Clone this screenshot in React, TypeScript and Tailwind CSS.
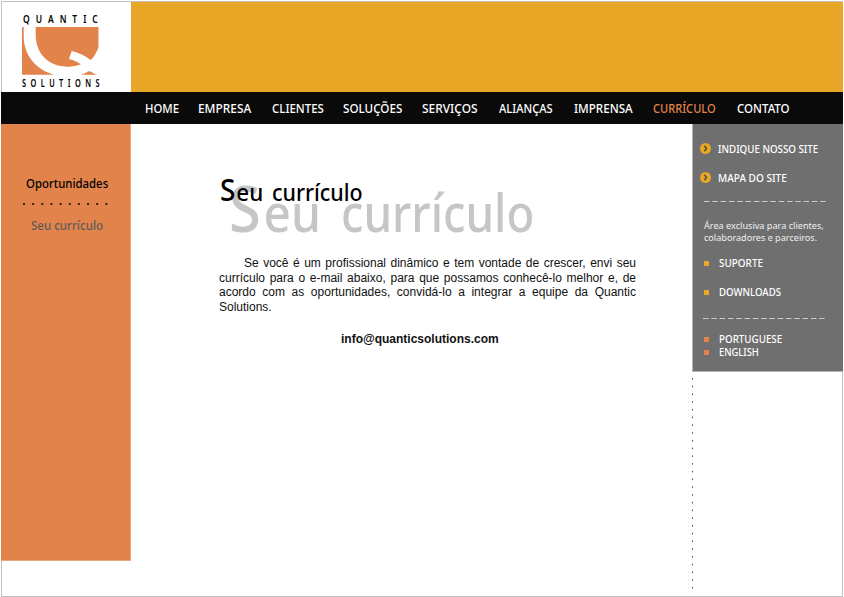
import { useLayoutEffect, useRef, useState, type ReactNode } from "react";

const META = "font-['Noto_Sans','Open_Sans',sans-serif]";

/** One line of text condensed or expanded to the width of its box. */
function Fit({ className = "", children }: { className?: string; children: ReactNode }) {
  const box = useRef<HTMLSpanElement>(null);
  const text = useRef<HTMLSpanElement>(null);
  const [scale, setScale] = useState(1);
  useLayoutEffect(() => {
    if (box.current && text.current) setScale(box.current.clientWidth / text.current.offsetWidth);
  }, []);
  return (
    <span ref={box} className={`block shrink-0 whitespace-nowrap ${META} ${className}`}>
      <span ref={text} className="inline-block origin-left" style={{ transform: `scaleX(${scale})` }}>
        {children}
      </span>
    </span>
  );
}

const nav = [
  { label: "HOME", box: "w-[34px] ml-[144px]" },
  { label: "EMPRESA", box: "w-[53px] ml-[19px]" },
  { label: "CLIENTES", box: "w-[52px] ml-[21px]" },
  { label: "SOLUÇÕES", box: "w-[59px] ml-[19px]" },
  { label: "SERVIÇOS", box: "w-[56px] ml-[20px]" },
  { label: "ALIANÇAS", box: "w-[54px] ml-[21px]" },
  { label: "IMPRENSA", box: "w-[59px] ml-[21px]" },
  { label: "CURRÍCULO", box: "w-[63px] ml-[20px] text-[#e2834c]" },
  { label: "CONTATO", box: "w-[53px] ml-[21px]" },
];

function Logo() {
  return (
    <div className="flex h-[90px] w-[129px] flex-col bg-white pt-[10px] pl-[20px]">
      <Fit className="ml-px h-[15px] w-[81px] text-[10px] leading-[15px] font-semibold tracking-[7px]">QUANTIC</Fit>
      <svg className="block h-[48px] w-[78px]" viewBox="0 0 78 48">
        <g fill="#e2834c">
          <path d="M0 0H1.7V9C1.7 28 13 42 32 47.7H0Z" />
          <path d="M13.7 0H76.5V20C75 25 72 30 68.7 33C63 29 57 25.5 49.7 24L47 32C52 33 56 35 59 37.3C55 39 51 39.7 46.3 39.7C27 39.7 13.7 27 13.7 8Z" />
          <path d="M58.5 47.7C62 46.8 65 45.5 67.3 44L74.5 47.7Z" />
        </g>
      </svg>
      <Fit className="mt-px h-[14px] w-[82px] text-[10px] leading-[14px] font-semibold tracking-[6px]">SOLUTIONS</Fit>
    </div>
  );
}

function Dashes({ className }: { className: string }) {
  return (
    <svg className={`block h-px w-[122px] ${className}`} viewBox="0 0 122 1">
      <path d="M0 .5H122" stroke="#c9c9c9" strokeDasharray="5.5 2.8" />
    </svg>
  );
}

function ArrowLink({ children, box }: { children: string; box: string }) {
  return (
    <div className="flex h-[29px] items-center">
      <svg className="block size-[11px]" viewBox="0 0 11 11">
        <circle cx="5.5" cy="5.5" r="5.5" fill="#e8a726" />
        <path d="M4.3 2.8L6.5 5.5L4.3 8.2" fill="none" stroke="#5e5439" strokeWidth="1.7" />
      </svg>
      <Fit className={`ml-[7px] text-[11.5px] leading-[16px] font-medium ${box}`}>{children}</Fit>
    </div>
  );
}

function SquareLink({ children, square, box }: { children: string; square: string; box: string }) {
  return (
    <div className="flex items-center">
      <span className={`mt-px block size-[5px] ${square}`} />
      <Fit className={`ml-[10px] text-[11.5px] leading-[13px] font-medium ${box}`}>{children}</Fit>
    </div>
  );
}

export default function App() {
  return (
    <div className="h-[597px] w-[844px] overflow-hidden bg-white pt-px pl-px">
      <div className="flex h-[596px] w-[842px] flex-col border border-[#c2c2c2]">
        <header className="flex h-[90px] shrink-0">
          <Logo />
          <div className="-mr-px flex-1 bg-[#e8a726]" />
        </header>
        <nav className="-mx-px flex h-[32px] shrink-0 items-center bg-[#0a0a0a] text-white">
          {nav.map((item) => (
            <Fit key={item.label} className={`text-[13px] leading-[32px] font-medium ${item.box}`}>
              {item.label}
            </Fit>
          ))}
        </nav>
        <div className="-mx-px flex min-h-0 flex-1">
          <aside className="flex h-[437px] w-[130px] shrink-0 flex-col items-start border-r border-b border-[#eba780] bg-[#e2834c] pt-[50px]">
            <Fit className="ml-[25px] h-[20px] w-[82px] text-[12.5px] leading-[20px] font-medium text-black">Oportunidades</Fit>
            <svg className="mt-[9px] ml-[22px] block h-[2px] w-[86px]" viewBox="0 0 86 2">
              <path d="M0 1H86" stroke="#000" strokeWidth="1.6" strokeDasharray="2 7.15" />
            </svg>
            <Fit className="mt-[11px] ml-[30px] h-[20px] w-[72px] text-[12.5px] leading-[20px] font-medium text-[#5f5c5a]">Seu currículo</Fit>
          </aside>
          <main className="w-[561px] shrink-0 pt-[46px] pl-[88px]">
            <div className="relative isolate h-[86px]">
              <h1 className="flex items-baseline pl-px font-medium text-black">
                <Fit className="w-[43px] text-[24px] leading-[40px]"><span className="text-[30px] tracking-[1px]">S</span>eu</Fit>
                <Fit className="ml-[9px] w-[91px] text-[24px] leading-[40px]">currículo</Fit>
              </h1>
              <div aria-hidden="true" className="absolute top-[-2px] left-[10px] -z-10 flex items-baseline font-medium text-[#c6c6c6]">
                <Fit className="w-[92px] text-[53px] leading-[80px]"><span className="text-[64px] tracking-[3px]">S</span>eu</Fit>
                <Fit className="ml-[20px] w-[193px] text-[53px] leading-[80px]">currículo</Fit>
              </div>
            </div>
            <div className="w-[417px] font-['Liberation_Sans',Arial,sans-serif] text-[12px] leading-[14.5px] text-[#111]">
              <p>
                <span className="block pl-[25px] [text-align-last:justify]">Se você é um profissional dinâmico e tem vontade de crescer, envi seu</span>
                <span className="block [text-align-last:justify]">currículo para o e-mail abaixo, para que possamos conhecê-lo melhor e, de</span>
                <span className="block [text-align-last:justify]">acordo com as oportunidades, convidá-lo a integrar a equipe da Quantic</span>
                <span className="block">Solutions.</span>
              </p>
              <p className="mt-[18px] pl-[122px] font-bold">info@quanticsolutions.com</p>
            </div>
          </main>
          <aside className="w-[151px] shrink-0">
            <div className="flex h-[248px] flex-col items-start border-b border-l border-[#b4b4b4] bg-[#6f6f6f] pt-[10px] pl-[7px] text-white">
              <ArrowLink box="w-[100px]">INDIQUE NOSSO SITE</ArrowLink>
              <ArrowLink box="w-[69px]">MAPA DO SITE</ArrowLink>
              <Dashes className="mt-[9px] ml-[4px]" />
              <div className="mt-[18px] ml-[4px] text-[9.5px] leading-[12px] text-[#f0f0f0]">
                <Fit className="w-[120px]">Área exclusiva para clientes,</Fit>
                <Fit className="w-[113px]">colaboradores e parceiros.</Fit>
              </div>
              <div className="mt-[12px] ml-[4px] flex flex-col gap-[16px]">
                <SquareLink square="bg-[#e8a726]" box="w-[44px]">SUPORTE</SquareLink>
                <SquareLink square="bg-[#e8a726]" box="w-[62px]">DOWNLOADS</SquareLink>
              </div>
              <Dashes className="mt-[20px] ml-[3px]" />
              <div className="mt-[13px] ml-[4px] flex flex-col">
                <SquareLink square="bg-[#e2834c]" box="w-[63px]">PORTUGUESE</SquareLink>
                <SquareLink square="bg-[#e2834c]" box="w-[40px]">ENGLISH</SquareLink>
              </div>
            </div>
            <svg className="mt-[6px] block h-[214px] w-px" viewBox="0 0 1 214">
              <path d="M.5 0V214" stroke="#444" strokeDasharray="1.5 6.24" />
            </svg>
          </aside>
        </div>
      </div>
    </div>
  );
}
